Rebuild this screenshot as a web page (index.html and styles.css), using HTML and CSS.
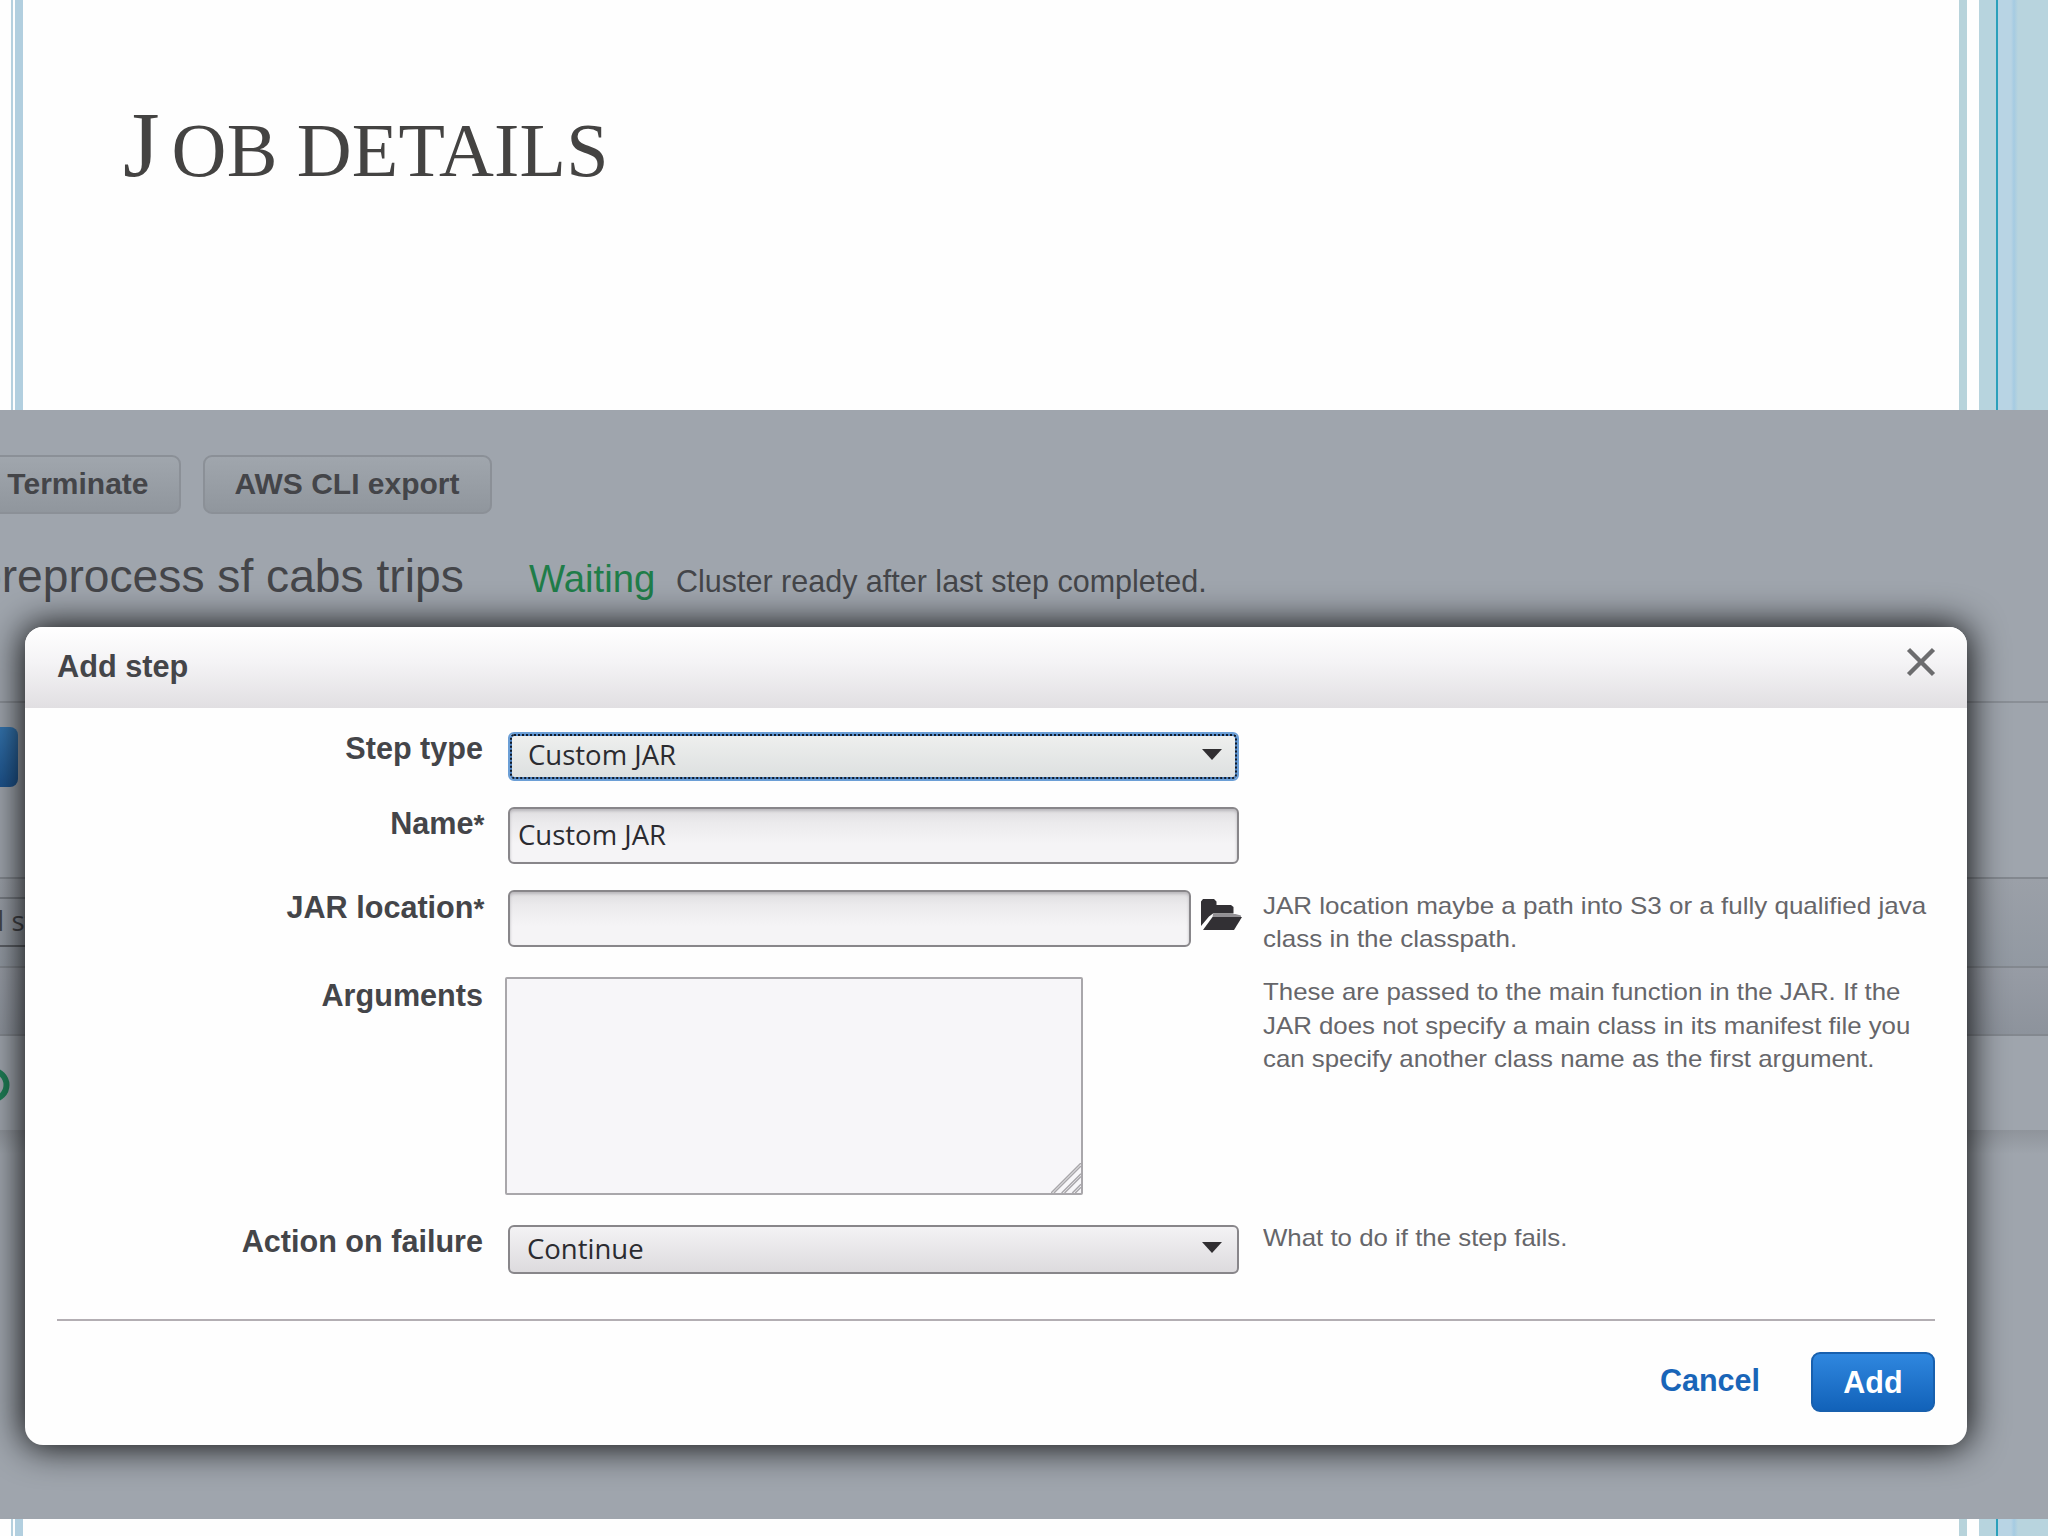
FILE: index.html
```html
<!DOCTYPE html>
<html lang="en">
<head>
<meta charset="utf-8">
<title>Job details</title>
<link rel="stylesheet" href="styles.css">
</head>
<body>
<main class="slide">
  <header class="slide-head">
    <h1 class="slide-title">Job details</h1>
  </header>
  <section class="console">
    <div class="toolbar">
      <span class="tool tool-terminate">Terminate</span>
      <span class="tool">AWS CLI export</span>
    </div>
    <div class="cluster">
      <span class="cluster-name">preprocess sf cabs trips</span>
      <span class="cluster-state">Waiting</span>
      <span class="cluster-note">Cluster ready after last step completed.</span>
    </div>
    <div class="steps">
      <div class="steps-actions"><span class="steps-button"></span></div>
      <div class="steps-filter"><span class="filter-select">All st</span></div>
      <div class="steps-columns"></div>
      <div class="steps-row"><svg class="ring" viewBox="0 0 36 36"><circle cx="18" cy="18" r="14.5"/></svg></div>
      <div class="steps-end"></div>
    </div>
    <div class="dialog">
      <div class="dialog-head">
        <span class="dialog-title">Add step</span>
        <svg class="close" viewBox="0 0 28 28"><path d="M1.500 1.500 26.500 26.500M26.500 1.500 1.500 26.500"/></svg>
      </div>
      <div class="form">
        <span class="label">Step type</span>
        <div class="select select-focus"><span>Custom JAR</span><i class="arrow"></i></div>
        <span></span>

        <span class="label">Name<span class="star">*</span></span>
        <div class="input">Custom JAR</div>
        <span></span>

        <span class="label">JAR location<span class="star">*</span></span>
        <div class="picker">
          <div class="input"></div>
          <svg class="folder" viewBox="0 0 41 31"><path d="M0 27V2.500L2 0H13L15.500 2.500V6H30L32.500 8V14.500H12L8 17.500Z"/><path d="M11.500 18H41L33 31H2Z"/><path class="rim" d="M12 15H34.500L40 16.500V18H11.500Z"/></svg>
        </div>
        <p class="help">JAR location maybe a path into S3 or a fully qualified java<br>class in the classpath.</p>

        <span class="label">Arguments</span>
        <div class="area"><svg class="grip" viewBox="0 0 31 31"><path d="M0 31 31 0M3 31 31 3M11 31 31 11M14 31 31 14M22 31 31 22M25 31 31 25"/></svg></div>
        <p class="help help-up">These are passed to the main function in the JAR. If the<br>JAR does not specify a main class in its manifest file you<br>can specify another class name as the first argument.</p>

        <span class="label">Action on failure</span>
        <div class="select"><span>Continue</span><i class="arrow"></i></div>
        <p class="help help-up">What to do if the step fails.</p>
      </div>
      <div class="dialog-foot">
        <span class="cancel">Cancel</span>
        <span class="add">Add</span>
      </div>
    </div>
  </section>
</main>
</body>
</html>
```

FILE: styles.css
```css
* { box-sizing: border-box; }

body { margin: 0; }

.slide {
  width: 2048px;
  height: 1536px;
  overflow: hidden;
  font-family: "Liberation Sans", Arial, sans-serif;
  color: #444549;
  background: linear-gradient(90deg,
    #fefefe 11px, #b5d0de 11px 13px, #fefefe 13px 15.500px,
    #b2cfdf 15.500px 23.500px, #fefefe 23.500px 1959px,
    #b7d3db 1959px 1967px, #fefefe 1967px 1979.500px,
    #b7d4de 1979.500px 1996px, #2ba0bb 1996px 1998px,
    #b8d4e4 1998px 2011px, #a5cbe2 2014px, #b8d4de 2018px);
}

.slide-head { height: 409.500px; padding: 89px 0 0 123px; }

.slide-title {
  margin: 0;
  font: 76px/110px "Liberation Serif", "Times New Roman", serif;
  text-transform: uppercase;
  letter-spacing: .2px;
  color: #444342;
}
.slide-title::first-letter { font-size: 94px; letter-spacing: 12px; }

/* Dimmed console page behind the dialog */
.console {
  position: relative;
  height: 1109.500px;
  padding-top: 45px;
  overflow: hidden;
  background: #9fa5ad;
}

.toolbar { display: flex; gap: 22px; margin-left: -60px; }
.tool {
  height: 59px;
  padding: 0 30px;
  border: 2px solid #8b9097;
  border-radius: 9px;
  font-weight: bold;
  font-size: 30px;
  line-height: 54px;
  white-space: nowrap;
  background: linear-gradient(#a0a6ad, #90969d);
}
.tool-terminate { width: 240.500px; text-align: right; }

.cluster {
  display: flex;
  align-items: baseline;
  height: 187px;
  padding-top: 32.500px;
  margin-left: -24px;
  line-height: 60px;
  white-space: nowrap;
}
.cluster-name { width: 553px; font-size: 46.200px; }
.cluster-state { width: 147px; font-size: 38.300px; color: #1f7d49; }
.cluster-note { font-size: 30.500px; }

.steps { border-top: 2px solid #8a8f96; }
.steps-actions { height: 174.500px; padding-top: 24px; }
.steps-button {
  display: block;
  width: 18px;
  height: 60px;
  border-radius: 0 8px 8px 0;
  background: linear-gradient(#3474ae, #1d528b);
}
.steps-filter {
  height: 89px;
  padding-top: 18px;
  border-top: 2px solid #83888f;
  background: linear-gradient(#9ba0a8, #9299a2);
}
.filter-select {
  display: block;
  width: 200px;
  height: 50px;
  margin-left: -29px;
  border: 2px solid #777c83;
  border-bottom-color: #5c6066;
  font: 27.500px/44px "Open Sans", "Noto Sans", sans-serif;
  white-space: nowrap;
}
.steps-columns {
  height: 70px;
  border: solid #83888f;
  border-width: 2px 0;
  background: linear-gradient(#979ca5, #8d939c);
}
.steps-row { height: 94px; padding-top: 31px; }
.ring { display: block; width: 36px; height: 36px; margin-left: -26px; fill: none; stroke: #1f7d55; stroke-width: 6; }
.steps-end { height: 24px; background: linear-gradient(#8f949b, #9fa5ad); }

/* Dialog floats over the console */
.dialog {
  position: absolute;
  left: 25px;
  top: 217.500px;
  width: 1942px;
  height: 817.500px;
  border-radius: 18px;
  overflow: hidden;
  background: #fefefe;
  box-shadow: 0 0 36px 2px rgba(0, 0, 0, .95);
}
.dialog-head {
  display: flex;
  justify-content: space-between;
  height: 81px;
  padding: 21px 32px 0;
  background: linear-gradient(#fff, #f4f3f5 45%, #e1dfe2);
}
.dialog-title { font-weight: bold; font-size: 30.700px; line-height: 38px; }
.close { width: 28px; height: 28px; fill: none; stroke: #6c6c6e; stroke-width: 4.400; overflow: visible; }

.form {
  display: grid;
  grid-template-columns: 458px 731px 1fr;
  grid-template-rows: 75px 83.500px 88.500px 246px 96px;
  align-items: start;
  padding-top: 22px;
}
.label { text-align: right; font-weight: bold; font-size: 30.600px; line-height: 36px; }
.star { display: inline-block; width: 10.500px; text-align: left; font-size: 28px; margin-right: -1px; }

.select, .input {
  display: flex;
  align-items: center;
  margin-left: 25px;
  border: 2px solid #88868a;
  border-radius: 6px;
  font: 27.500px/40px "Open Sans", "Noto Sans", sans-serif;
  color: #2b2b30;
}
.form > .select, .form > .input, .picker { width: 731px; }
.select {
  justify-content: space-between;
  height: 49px;
  margin-top: 2px;
  padding: 0 15px 2px 17px;
  background: linear-gradient(#f3f2f4, #dddbde);
}
.form > .select-focus {
  width: 727px;
  height: 45px;
  margin: 3.500px 0 0 27px;
  padding: 0 13px 2px 16px;
  border: 2px dotted #101a28;
  border-radius: 4px;
  outline: 2px solid #6c9fd6;
  background: linear-gradient(#eeefee, #dde0e0) padding-box, linear-gradient(#4f86c6, #4f86c6) border-box;
}
.arrow {
  border: solid transparent;
  border-width: 11px 10px 0;
  border-top-color: #302e31;
  margin-top: -2px;
}
.input {
  height: 57px;
  margin-top: 1.500px;
  padding-left: 8px;
  background: linear-gradient(#dedde0, #ebeaec 25%, #f5f4f6 65%);
  box-shadow: inset 0 2px 3px #b9b7bb;
}
.picker { display: flex; gap: 10px; margin-left: 25px; margin-top: 1.500px; }
.picker .input { flex: none; width: 682.500px; margin: 0; }
.folder { flex: none; width: 41px; height: 31px; margin-top: 9px; fill: #323034; overflow: visible; }
.folder .rim { fill: #929094; }
.area {
  display: flex;
  align-items: flex-end;
  justify-content: flex-end;
  width: 578px;
  height: 218px;
  margin-left: 22px;
  border: 2px solid #a9a7ab;
  border-radius: 2px;
  background: #f7f6f9;
}
.grip { width: 30px; height: 30px; fill: none; stroke: #a8a6aa; stroke-width: 1.500; }

.help {
  margin: 0 0 0 49px;
  font-size: 24px;
  line-height: 33.500px;
  white-space: nowrap;
  color: #66666a;
  transform: scaleX(1.083);
  transform-origin: 0 0;
}
.help-up { margin-top: -2px; transform: scaleX(1.076); }

.dialog-foot {
  display: flex;
  align-items: flex-start;
  justify-content: flex-end;
  gap: 51px;
  margin: 0 32px;
  padding-top: 31px;
  border-top: 2px solid #b3aeb3;
  font-weight: bold;
  font-size: 30.500px;
}
.cancel { line-height: 56px; color: #1965b8; }
.add {
  width: 124px;
  height: 60px;
  border: 2px solid #1860ae;
  border-radius: 9px;
  line-height: 57px;
  text-align: center;
  color: #fff;
  background: linear-gradient(#2f87df, #1262b9);
}
```
